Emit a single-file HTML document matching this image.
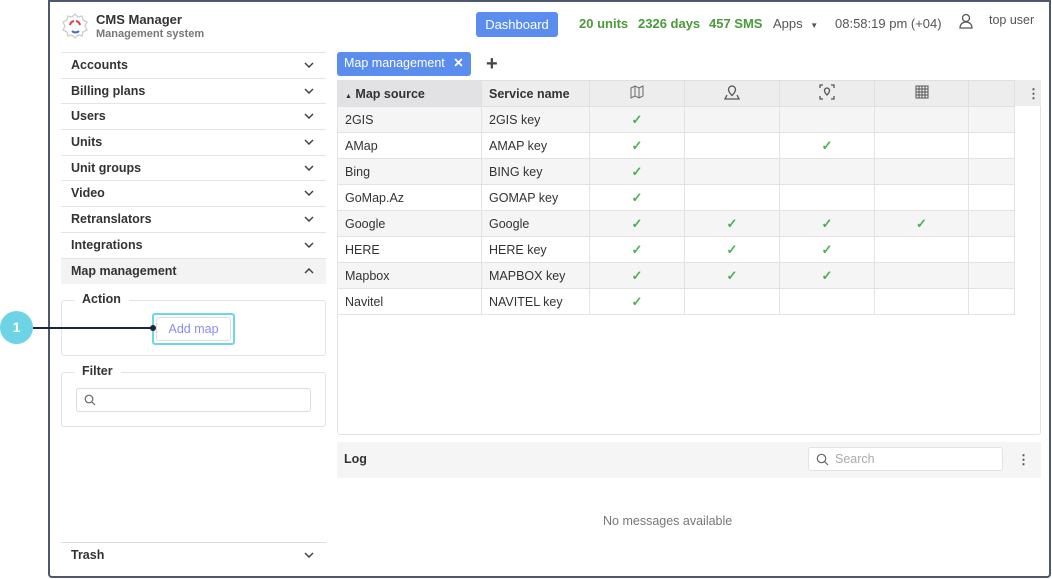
<!DOCTYPE html>
<html><head><style>
*{box-sizing:border-box;margin:0;padding:0}
body{width:1052px;height:579px;background:#fff;font-family:"Liberation Sans",sans-serif;position:relative;overflow:hidden;color:#333;font-size:12px}
.frame{position:absolute;left:48px;top:0;width:1003px;height:578px;border:2px solid #4b5870;border-radius:0 0 4px 4px}
.a{position:absolute}
.side{left:61px;width:265px}
.si{position:absolute;left:61px;width:265px;height:26px;border-top:1px solid #e4e4e4;font-size:12.5px;font-weight:bold;color:#333;padding:5px 10px}
.si svg{position:absolute;right:12px;top:9px}
.fs{position:absolute;left:61px;width:265px;border:1px solid #e2e2e2;border-radius:3px}
.lg{position:absolute;background:#fff;padding:0 8px;font-size:12.5px;font-weight:bold;color:#333}
table{border-collapse:collapse;position:absolute;left:337px;top:80px}
td{height:26px;border:1px solid #e3e3e3;font-size:12.5px;padding:0 7px;color:#333}
tr:nth-child(even) td{background:#f5f5f5}
th{height:26px;background:#ededed;border:1px solid #e0e0e0;font-size:12.5px;text-align:left;padding:0 7px;font-weight:bold;color:#333}
.c{text-align:center;color:#4caf50;font-size:13px;font-weight:bold}
</style></head><body>
<div class="frame"></div>
<!-- logo -->
<svg class="a" style="left:61px;top:12px" width="28" height="28" viewBox="0 0 28 28"><path d="M14 2l3 3 4-1 1 4 4 2-2 4 2 4-4 2-1 4-4-1-3 3-3-3-4 1-1-4-4-2 2-4-2-4 4-2 1-4 4 1z" fill="none" stroke="#ccc" stroke-width="1.3"/><path d="M9 13a5 5 0 0 1 4-4" stroke="#e53950" stroke-width="2" fill="none"/><path d="M19 13a5 5 0 0 0-4-4" stroke="#e53950" stroke-width="2" fill="none"/><path d="M11 19a5 5 0 0 0 7 0" stroke="#3a6fd8" stroke-width="2" fill="none"/></svg>
<div class="a" style="left:96px;top:12px;font-size:13px;font-weight:bold;color:#333">CMS Manager</div>
<div class="a" style="left:96px;top:28px;font-size:11px;font-weight:bold;color:#777">Management system</div>
<div class="a" style="left:476px;top:12px;width:82px;height:25px;background:#5b8def;border-radius:3px;color:#fff;font-size:13px;text-align:center;line-height:25px">Dashboard</div>
<div class="a" style="left:579px;top:16px;font-size:13px;color:#4a9a3a;font-weight:bold">20 units</div>
<div class="a" style="left:638px;top:16px;font-size:13px;color:#4a9a3a;font-weight:bold">2326 days</div>
<div class="a" style="left:709px;top:16px;font-size:13px;color:#4a9a3a;font-weight:bold">457 SMS</div>
<div class="a" style="left:773px;top:16px;font-size:13px;color:#555">Apps <span style="font-size:8px;margin-left:4px">▼</span></div>
<div class="a" style="left:835px;top:16px;font-size:13px;color:#555">08:58:19 pm (+04)</div>
<svg class="a" style="left:958px;top:12px" width="16" height="18" viewBox="0 0 16 18"><circle cx="8" cy="6" r="3.5" fill="none" stroke="#555" stroke-width="1.3"/><path d="M2 16c0-4 3-6 6-6s6 2 6 6z" fill="none" stroke="#555" stroke-width="1.3"/></svg>
<div class="a" style="left:989px;top:13px;font-size:12.5px;color:#555">top user</div>

<!-- sidebar -->
<div class="si" style="top:52px">Accounts<svg width="10" height="6"><path d="M1 1l4 4 4-4" stroke="#444" stroke-width="1.5" fill="none"/></svg></div>
<div class="si" style="top:78px">Billing plans<svg width="10" height="6"><path d="M1 1l4 4 4-4" stroke="#444" stroke-width="1.5" fill="none"/></svg></div>
<div class="si" style="top:103px">Users<svg width="10" height="6"><path d="M1 1l4 4 4-4" stroke="#444" stroke-width="1.5" fill="none"/></svg></div>
<div class="si" style="top:129px">Units<svg width="10" height="6"><path d="M1 1l4 4 4-4" stroke="#444" stroke-width="1.5" fill="none"/></svg></div>
<div class="si" style="top:155px">Unit groups<svg width="10" height="6"><path d="M1 1l4 4 4-4" stroke="#444" stroke-width="1.5" fill="none"/></svg></div>
<div class="si" style="top:180px">Video<svg width="10" height="6"><path d="M1 1l4 4 4-4" stroke="#444" stroke-width="1.5" fill="none"/></svg></div>
<div class="si" style="top:206px">Retranslators<svg width="10" height="6"><path d="M1 1l4 4 4-4" stroke="#444" stroke-width="1.5" fill="none"/></svg></div>
<div class="si" style="top:232px">Integrations<svg width="10" height="6"><path d="M1 1l4 4 4-4" stroke="#444" stroke-width="1.5" fill="none"/></svg></div>
<div class="si" style="top:258px;background:#f3f3f3">Map management<svg width="10" height="6"><path d="M1 5l4-4 4 4" stroke="#444" stroke-width="1.5" fill="none"/></svg></div>
<div class="fs" style="top:300px;height:56px"></div>
<div class="lg" style="left:74px;top:292px">Action</div>
<div class="a" style="left:152px;top:313px;width:83px;height:32px;border:2px solid #6ad8e8;border-radius:3px;padding:2px"><div style="border:1px solid #ddd;border-radius:3px;height:24px;text-align:center;line-height:22px;color:#8a8cf0;font-size:12.5px">Add map</div></div>
<div class="fs" style="top:372px;height:55px"></div>
<div class="lg" style="left:74px;top:364px">Filter</div>
<div class="a" style="left:76px;top:388px;width:235px;height:24px;border:1px solid #ddd;border-radius:3px"></div>
<svg class="a" style="left:84px;top:394px" width="12" height="12"><circle cx="5" cy="5" r="3.8" fill="none" stroke="#666" stroke-width="1.2"/><path d="M8 8l3 3" stroke="#666" stroke-width="1.2"/></svg>
<div class="si" style="top:542px;border-top:1px solid #ddd">Trash<svg width="10" height="6"><path d="M1 1l4 4 4-4" stroke="#444" stroke-width="1.5" fill="none"/></svg></div>

<!-- annotation -->
<div class="a" style="left:0;top:311px;width:33px;height:33px;border-radius:50%;background:#6cd4e4;color:#fff;font-weight:bold;font-size:14px;text-align:center;line-height:33px">1</div>
<div class="a" style="left:33px;top:327px;width:120px;height:2px;background:#1a2540"></div>
<div class="a" style="left:150px;top:325px;width:6px;height:6px;border-radius:50%;background:#1a2540"></div>

<!-- tabs -->
<div class="a" style="left:337px;top:52px;width:134px;height:24px;background:#5b8def;border-radius:3px;color:#fff;font-size:12.5px;line-height:23px;padding-left:7px">Map management <span style="margin-left:5px;font-weight:bold">✕</span></div>
<div class="a" style="left:486px;top:53px;font-size:20px;color:#444;font-weight:bold">+</div>

<div class="a" style="left:337px;top:80px;width:704px;height:355px;border:1px solid #e3e3e3;border-radius:3px"></div>
<div class="a" style="left:1013px;top:80px;width:28px;height:26px;background:#ededed"></div>
<div class="a" style="left:1027px;top:86px;font-size:13px;color:#555;font-weight:bold">⋮</div>
<table>
<tr><th style="width:144px;background:#e2e2e4"><span style="font-size:7px">▲</span> Map source</th><th style="width:108px">Service name</th>
<th style="width:95px;text-align:center"><svg width="14" height="14"><path d="M1 3l4-2 4 2 4-2v10l-4 2-4-2-4 2z M5 1v10 M9 3v10" fill="none" stroke="#666"/></svg></th>
<th style="width:95px;text-align:center"><svg width="16" height="15"><path d="M8 1a3.5 3.5 0 0 1 3.5 3.5c0 2.5-3.5 6-3.5 6s-3.5-3.5-3.5-6A3.5 3.5 0 0 1 8 1z M3 10l-2 4h14l-2-4" fill="none" stroke="#555" stroke-width="1.3"/></svg></th>
<th style="width:95px;text-align:center"><svg width="16" height="16"><path d="M1 4V1h3M12 1h3v3M15 12v3h-3M4 15H1v-3" fill="none" stroke="#555" stroke-width="1.3"/><path d="M8 4a2.5 2.5 0 0 1 2.5 2.5C10.5 8.5 8 11 8 11S5.5 8.5 5.5 6.5A2.5 2.5 0 0 1 8 4z" fill="none" stroke="#555" stroke-width="1.3"/></svg></th>
<th style="width:94px;text-align:center"><svg width="14" height="14"><rect x="1" y="1" width="12" height="12" fill="none" stroke="#555"/><path d="M4 1v12M7 1v12M10 1v12M1 4h12M1 7h12M1 10h12" stroke="#555"/></svg></th>
<th style="width:46px"></th></tr>
<tr><td>2GIS</td><td>2GIS key</td><td class="c">✓</td><td></td><td></td><td></td><td></td></tr>
<tr><td>AMap</td><td>AMAP key</td><td class="c">✓</td><td></td><td class="c">✓</td><td></td><td></td></tr>
<tr><td>Bing</td><td>BING key</td><td class="c">✓</td><td></td><td></td><td></td><td></td></tr>
<tr><td>GoMap.Az</td><td>GOMAP key</td><td class="c">✓</td><td></td><td></td><td></td><td></td></tr>
<tr><td>Google</td><td>Google</td><td class="c">✓</td><td class="c">✓</td><td class="c">✓</td><td class="c">✓</td><td></td></tr>
<tr><td>HERE</td><td>HERE key</td><td class="c">✓</td><td class="c">✓</td><td class="c">✓</td><td></td><td></td></tr>
<tr><td>Mapbox</td><td>MAPBOX key</td><td class="c">✓</td><td class="c">✓</td><td class="c">✓</td><td></td><td></td></tr>
<tr><td>Navitel</td><td>NAVITEL key</td><td class="c">✓</td><td></td><td></td><td></td><td></td></tr>
</table>

<!-- log -->
<div class="a" style="left:337px;top:442px;width:704px;height:36px;background:#f5f5f5"></div>
<div class="a" style="left:344px;top:452px;font-size:12.5px;font-weight:bold;color:#333">Log</div>
<div class="a" style="left:808px;top:447px;width:195px;height:24px;background:#fff;border:1px solid #e3e3e3;border-radius:3px"></div>
<svg class="a" style="left:816px;top:453px" width="13" height="13"><circle cx="5.5" cy="5.5" r="4.2" fill="none" stroke="#666" stroke-width="1.2"/><path d="M8.5 8.5l3.5 3.5" stroke="#666" stroke-width="1.2"/></svg>
<div class="a" style="left:835px;top:452px;font-size:12.5px;color:#aaa">Search</div>
<div class="a" style="left:1017px;top:452px;font-size:13px;color:#555;font-weight:bold">⋮</div>
<div class="a" style="left:603px;top:514px;font-size:12.5px;color:#777">No messages available</div>
</body></html>
